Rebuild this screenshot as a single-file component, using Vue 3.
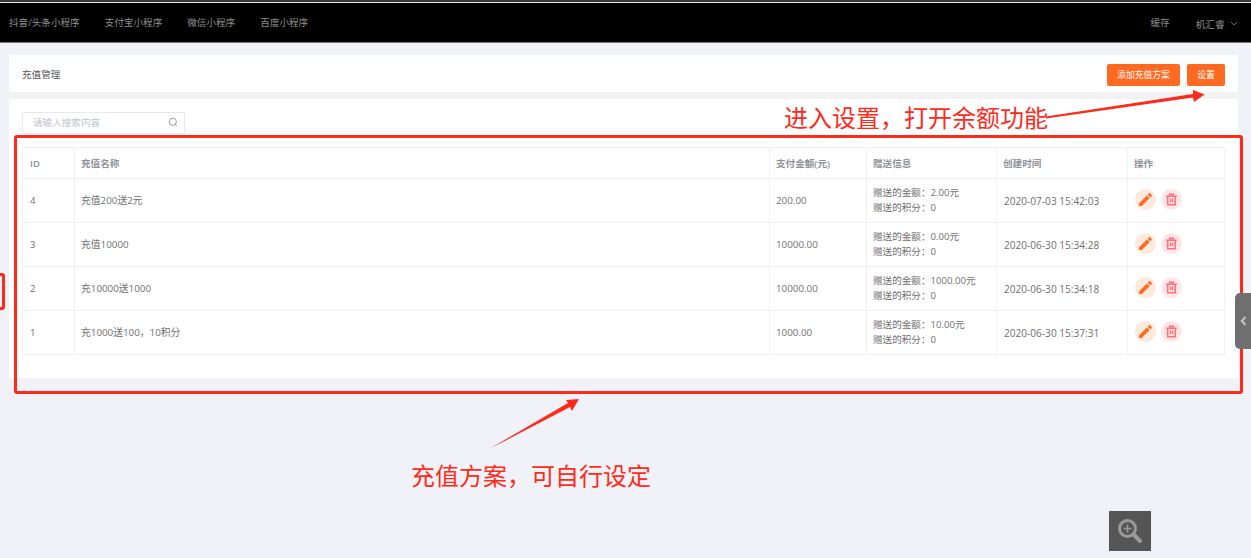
<template>
  <div class="page">
    <header class="topbar">
      <nav class="nav">
        <a v-for="item in navItems" :key="item">{{ item }}</a>
      </nav>
      <div class="top-right">
        <span class="cache">缓存</span>
        <span class="user">机汇睿
          <svg width="8" height="5" viewBox="0 0 8 5" fill="none" stroke="#8a8a8a" stroke-width="0.8"><path d="M1 1l3 3 3-3"/></svg>
        </span>
      </div>
    </header>

    <main class="content">
      <section class="head-card">
        <span class="head-title">充值管理</span>
        <div class="head-actions">
          <button class="btn">添加充值方案</button>
          <button class="btn btn-small">设置</button>
        </div>
      </section>

      <section class="list-card">
        <div class="search">
          <span>请输入搜索内容</span>
          <svg width="10" height="10" viewBox="0 0 10 10" fill="none" stroke="#8b8f96" stroke-width="0.9"><circle cx="4.8" cy="4.8" r="3.6"/><path d="M7.5 7.5l1.3 1.3"/></svg>
        </div>

        <table class="table">
          <colgroup>
            <col style="width: 52px" />
            <col style="width: 695px" />
            <col style="width: 97px" />
            <col style="width: 130px" />
            <col style="width: 131px" />
            <col />
          </colgroup>
          <thead>
            <tr>
              <th>ID</th>
              <th>充值名称</th>
              <th>支付金额(元)</th>
              <th>赠送信息</th>
              <th>创建时间</th>
              <th>操作</th>
            </tr>
          </thead>
          <tbody>
            <tr v-for="row in rows" :key="row.id">
              <td>{{ row.id }}</td>
              <td class="cell-name">{{ row.name }}</td>
              <td class="cell-pay">{{ row.pay }}</td>
              <td class="gift">
                <div>赠送的金额：{{ row.gift }}元</div>
                <div>赠送的积分：0</div>
              </td>
              <td class="cell-time">{{ row.time }}</td>
              <td>
                <div class="ops">
                  <span class="op op-edit">
                    <svg width="17" height="17" viewBox="0 0 24 24" fill="#ff6a22"><path d="M3 17.25V21h3.75L17.8 9.94l-3.75-3.75L3 17.25zM20.7 7.04a1 1 0 0 0 0-1.41l-2.34-2.34a1 1 0 0 0-1.41 0l-1.83 1.83 3.75 3.75 1.83-1.83z"/></svg>
                  </span>
                  <span class="op op-del">
                    <svg width="13" height="13" viewBox="0 0 12 12" fill="none" stroke="#ff6f78" stroke-width="1.4"><path d="M1 3h10M4.300 3V1.200h3.400V3M2.500 3v7.800h7V3M5 5v3.500M7 5v3.500"/></svg>
                  </span>
                </div>
              </td>
            </tr>
          </tbody>
        </table>
      </section>
    </main>

    <!-- annotations drawn over the page -->
    <div class="mark-main"></div>
    <div class="mark-left"></div>
    <span class="note note-top">进入设置，打开余额功能</span>
    <span class="note note-bottom">充值方案，可自行设定</span>
    <svg class="arrows" width="1251" height="558" viewBox="0 0 1251 558">
      <path d="M1046 116.500L1193 94L1193 90L1204.500 94.500L1194 102L1193 97.500L1046 118.500Z" fill="#ff2a1a"/>
      <path d="M490 448.500L568 403L566 400L579 399L572 411L570 407Z" fill="#ff2a1a"/>
    </svg>

    <div class="side-tab">
      <svg width="7" height="10" viewBox="0 0 7 10" fill="none" stroke="#c4c4c4" stroke-width="2"><path d="M5.500 1L1.800 5l3.700 4"/></svg>
    </div>
    <div class="zoom-btn">
      <svg width="28" height="28" viewBox="0 0 28 28" fill="none" stroke="#9a9a9a"><circle cx="11.500" cy="11.500" r="8" stroke-width="3"/><path d="M7.500 11.500h8M11.500 7.500v8" stroke-width="1.600"/><path d="M18 18l6 6" stroke-width="4" stroke-linecap="round"/></svg>
    </div>
  </div>
</template>

<script setup>
const navItems = ['抖音/头条小程序', '支付宝小程序', '微信小程序', '百度小程序']

const rows = [
  { id: 4, name: '充值200送2元', pay: '200.00', gift: '2.00', time: '2020-07-03 15:42:03' },
  { id: 3, name: '充值10000', pay: '10000.00', gift: '0.00', time: '2020-06-30 15:34:28' },
  { id: 2, name: '充10000送1000', pay: '10000.00', gift: '1000.00', time: '2020-06-30 15:34:18' },
  { id: 1, name: '充1000送100，10积分', pay: '1000.00', gift: '10.00', time: '2020-06-30 15:37:31' },
]
</script>

<style>
html,
body {
  margin: 0;
  background: #f0f2f7;
  overflow: hidden;
}
</style>

<style scoped>
.page {
  position: relative;
  width: 1251px;
  height: 558px;
  overflow: hidden;
  background: #f0f2f7;
  font-family: "Open Sans", "Noto Sans CJK SC", sans-serif;
  font-size: 9.6px;
  color: #6f6f6f;
}

.topbar {
  height: 40px;
  border-top: 2px solid #3a3a3a;
  border-bottom: 1px solid #777;
  box-shadow: inset 0 1px 0 #e8e8e8;
  background: #000;
  display: flex;
  align-items: center;
  justify-content: space-between;
  padding: 0 13px 0 9px;
  color: #8d8d8d;
}

.nav {
  display: flex;
  gap: 25px;
}

.top-right {
  display: flex;
  gap: 26px;
  align-items: center;
}

.user {
  padding-top: 3px;
}

.user svg {
  margin-left: 3px;
  vertical-align: 2px;
}

.content {
  padding: 12px 13px 0 9px;
}

.head-card {
  height: 37px;
  background: #fff;
  display: flex;
  align-items: center;
  justify-content: space-between;
  padding: 0 13px 0 13px;
  border-radius: 2px 2px 0 0;
}

.head-title {
  color: #555;
}

.head-actions {
  display: flex;
  gap: 7px;
  margin-top: 2px;
}

.btn {
  width: 73px;
  height: 22px;
  padding: 0;
  border: 0;
  border-radius: 2px;
  background: #ff6a22;
  color: #fff;
  font: inherit;
  font-size: 8.800px;
}

.btn-small {
  width: 38px;
}

.list-card {
  margin-top: 7px;
  height: 279px;
  box-sizing: border-box;
  background: #fff;
  padding: 13px 14px 0 13px;
  box-shadow: 0 -7px 0 #f2f2f3;
}

.search {
  width: 163px;
  height: 22px;
  box-sizing: border-box;
  border: 1px solid #e6e8ec;
  border-radius: 2px;
  display: flex;
  align-items: center;
  justify-content: space-between;
  padding: 0 6px 2px 10px;
  color: #c0c4cc;
}

.table {
  margin-top: 13px;
  width: 1203px;
  table-layout: fixed;
  border-collapse: collapse;
}

.table th,
.table td {
  box-sizing: border-box;
  border: 1px solid #eff1f6;
  padding: 0 6px;
  text-align: left;
  font-weight: 400;
}

.table th:nth-child(1),
.table td:nth-child(1),
.table td:nth-child(5),
.table td:nth-child(6) {
  padding-left: 7px;
}

.table th {
  height: 31px;
  color: #8f9299;
  font-weight: 600;
}

.table td {
  height: 44px;
}

.table td.cell-name {
  padding-bottom: 2px;
  font-size: 9.800px;
}

.cell-pay {
  font-size: 9.800px;
}

.cell-time {
  font-size: 10.100px;
}

.gift div {
  line-height: 14.500px;
}

.ops {
  display: flex;
  gap: 5px;
  margin-bottom: 3px;
}

.op {
  width: 21px;
  height: 21px;
  border-radius: 50%;
  display: flex;
  align-items: center;
  justify-content: center;
}

.op-edit {
  background: #ffe8dc;
}

.op-del {
  background: #ffe6e8;
}

.mark-main {
  position: absolute;
  left: 14px;
  top: 135px;
  width: 1229px;
  height: 259px;
  box-sizing: border-box;
  border: 3px solid #ff2a1a;
  border-radius: 3px;
}

.mark-left {
  position: absolute;
  left: -10px;
  top: 273px;
  width: 15px;
  height: 37px;
  box-sizing: border-box;
  border: 3px solid #ff2a1a;
  border-radius: 3px;
}

.note {
  position: absolute;
  font-size: 24px;
  line-height: 30px;
  color: #ff2a1a;
  white-space: nowrap;
  font-family: "Noto Sans CJK SC", sans-serif;
}

.note-top {
  left: 784px;
  top: 102px;
}

.note-bottom {
  left: 411px;
  top: 460px;
}

.arrows {
  position: absolute;
  left: 0;
  top: 0;
  pointer-events: none;
}

.side-tab {
  position: absolute;
  right: 0;
  top: 293px;
  width: 16px;
  height: 56px;
  background: #6f6f6f;
  border-radius: 5px 0 0 5px;
  display: flex;
  align-items: center;
  justify-content: center;
}

.zoom-btn {
  position: absolute;
  left: 1109px;
  top: 511px;
  width: 42px;
  height: 40px;
  background: #555;
  display: flex;
  align-items: center;
  justify-content: center;
}
</style>
